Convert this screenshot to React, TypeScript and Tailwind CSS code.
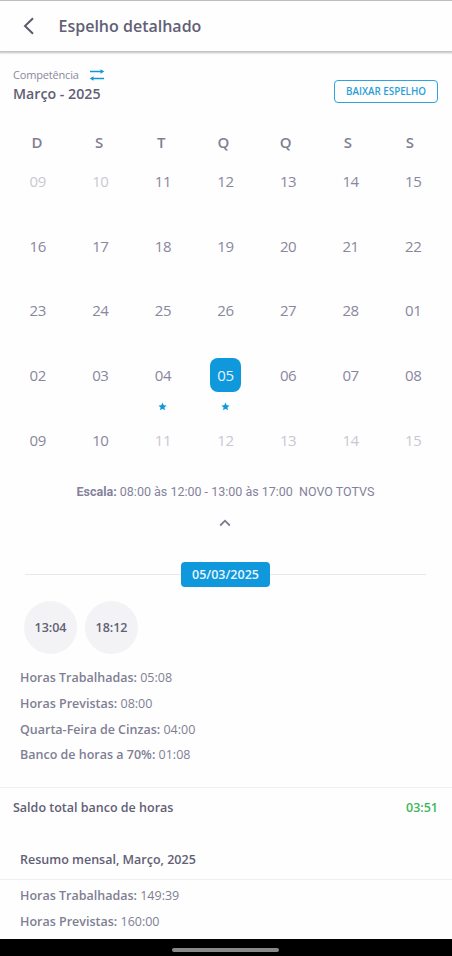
import React from "react";

type Day = { n: string; muted?: boolean; selected?: boolean; star?: boolean };

const weekdays = ["D", "S", "T", "Q", "Q", "S", "S"];

const weeks: Day[][] = [
  [{ n: "09", muted: true }, { n: "10", muted: true }, { n: "11" }, { n: "12" }, { n: "13" }, { n: "14" }, { n: "15" }],
  [{ n: "16" }, { n: "17" }, { n: "18" }, { n: "19" }, { n: "20" }, { n: "21" }, { n: "22" }],
  [{ n: "23" }, { n: "24" }, { n: "25" }, { n: "26" }, { n: "27" }, { n: "28" }, { n: "01" }],
  [{ n: "02" }, { n: "03" }, { n: "04", star: true }, { n: "05", selected: true, star: true }, { n: "06" }, { n: "07" }, { n: "08" }],
  [{ n: "09" }, { n: "10" }, { n: "11", muted: true }, { n: "12", muted: true }, { n: "13", muted: true }, { n: "14", muted: true }, { n: "15", muted: true }],
];

const dayTotals = [
  ["Horas Trabalhadas:", "05:08"],
  ["Horas Previstas:", "08:00"],
  ["Quarta-Feira de Cinzas:", "04:00"],
  ["Banco de horas a 70%:", "01:08"],
];

const monthTotals = [
  ["Horas Trabalhadas:", "149:39"],
  ["Horas Previstas:", "160:00"],
];

function Star() {
  return (
    <svg className="mt-[10px] h-[9px] w-[9px]" viewBox="0 0 24 24" fill="#1098dc">
      <path d="M12 1.500l3.200 7 7.600.8-5.700 5.100 1.600 7.500-6.700-3.800-6.700 3.800 1.600-7.500L1.200 9.300l7.600-.8z" />
    </svg>
  );
}

function DayCell({ day }: { day: Day }) {
  const tone = day.selected ? "bg-[#1098dc] text-[#e4f4fd]" : day.muted ? "text-[#c9c8d2]" : "text-[#89879d]";
  return (
    <div className="flex flex-col items-center">
      <span className={`flex h-[34px] w-[31px] items-center justify-center rounded-[8px] text-[15px] tracking-[-0.4px] ${tone}`}>{day.n}</span>
      {day.star && <Star />}
    </div>
  );
}

function Totals({ rows }: { rows: string[][] }) {
  return (
    <div className="pl-5 text-[12.5px] leading-[26px] text-[#807e93]">
      {rows.map(([label, value]) => (
        <div key={label} className="h-[25.900px] whitespace-pre">
          <span className="font-semibold">{label}</span> {value}
        </div>
      ))}
    </div>
  );
}

export default function App() {
  return (
    <div className="flex h-[956px] w-[452px] flex-col overflow-hidden bg-[#fefefe] font-['Open_Sans',sans-serif] text-[#626075]">
      <header className="flex h-[51px] shrink-0 items-center border-t border-[#bdbdbd] shadow-[0_1px_2px_1px_rgba(0,0,0,0.25)]">
        <svg className="ml-[23px] h-[18px] w-[12px]" viewBox="0 0 12 18" fill="none" stroke="#5d5a70" strokeWidth="2">
          <path d="M10 1.200L2 9l8 7.800" />
        </svg>
        <h1 className="ml-[23.5px] text-[16px] font-semibold">Espelho detalhado</h1>
      </header>

      <section className="flex h-[75px] shrink-0 justify-between pl-[13px] pr-[14px]">
        <div className="pt-[15px]">
          <div className="flex h-[18px] items-center text-[11px] tracking-[-0.18px] text-[#8b899c]">
            Competência
            <svg className="ml-[10px] h-[12px] w-[16px]" viewBox="0 0 16 12" fill="#1098dc">
              <path d="M1 1.700h10.500V.2L15.300 2.500 11.500 4.800V3.300H1zM15 8.700H4.500V7.200L.7 9.500l3.800 2.300v-1.500H15z" />
            </svg>
          </div>
          <div className="text-[14.2px] font-semibold leading-[19px]">Março - 2025</div>
        </div>
        <button className="mt-[29px] h-[23px] w-[104px] rounded-[4px] border border-[#2fa3dc] text-[9.8px] font-semibold leading-none text-[#2b9fd9]">
          BAIXAR ESPELHO
        </button>
      </section>

      <div className="ml-[6px] grid h-[38px] w-[435px] shrink-0 grid-cols-7 pt-[5px] text-center text-[15px] font-semibold leading-[22px] text-[#817f94]">
        {weekdays.map((d, i) => (
          <span key={i}>{d}</span>
        ))}
      </div>
      <div className="ml-[6.500px] w-[438px] shrink-0">
        {weeks.map((week, i) => (
          <div key={i} className="grid h-[64.750px] grid-cols-7">
            {week.map((day) => (
              <DayCell key={day.n} day={day} />
            ))}
          </div>
        ))}
      </div>

      <p className="-mt-[6px] h-[30px] shrink-0 whitespace-pre pr-px text-center font-['Roboto',sans-serif] text-[12.5px] leading-[20px] text-[#84829a]">
        <span className="font-bold">Escala:</span> 08:00 às 12:00 - 13:00 às 17:00  NOVO TOTVS
      </p>
      <div className="flex h-[50px] shrink-0 justify-center pr-[2px]">
        <svg className="mt-[7px] h-[8px] w-[12px]" viewBox="0 0 12 8" fill="none" stroke="#7d7b90" strokeWidth="1.8">
          <path d="M1.200 6.500L6 1.700l4.800 4.800" />
        </svg>
      </div>
      <div className="flex h-[25px] shrink-0 items-center pl-[25px] pr-[26px]">
        <div className="h-px flex-1 bg-[#e8e8ea]" />
        <span className="flex h-[25px] w-[89px] items-center justify-center rounded-[4px] bg-[#1098dc] pt-[2px] text-[12.5px] font-semibold text-[#e8f6fd]">05/03/2025</span>
        <div className="h-px flex-1 bg-[#e8e8ea]" />
      </div>
      <div className="mt-[14px] flex shrink-0 gap-[8px] pl-[24px]">
        {["13:04", "18:12"].map((t) => (
          <span key={t} className="flex h-[53px] w-[53px] items-center justify-center rounded-full bg-[#f3f3f6] pt-[2px] text-[12.5px] font-semibold">{t}</span>
        ))}
      </div>
      <div className="mt-[11px] h-[122px] shrink-0">
        <Totals rows={dayTotals} />
      </div>
      <div className="flex h-[40px] shrink-0 items-center justify-between border-t border-[#efeff1] pl-[13px] pr-[14px] pt-[2px] text-[12.5px] font-semibold">
        <span>Saldo total banco de horas</span>
        <span className="text-[#3fb65b]">03:51</span>
      </div>
      <div className="h-[53px] shrink-0 border-b border-[#efeff1] pl-5 pt-[23.5px] text-[12.5px] font-semibold leading-[20px]">Resumo mensal, Março, 2025</div>
      <div className="h-[59px] shrink-0 pt-[3px]">
        <Totals rows={monthTotals} />
      </div>
      <footer className="flex min-h-0 flex-1 justify-center bg-black pr-[2px] pt-[9px]">
        <div className="h-[4px] w-[107px] rounded-full bg-[#8b888c]" />
      </footer>
    </div>
  );
}
